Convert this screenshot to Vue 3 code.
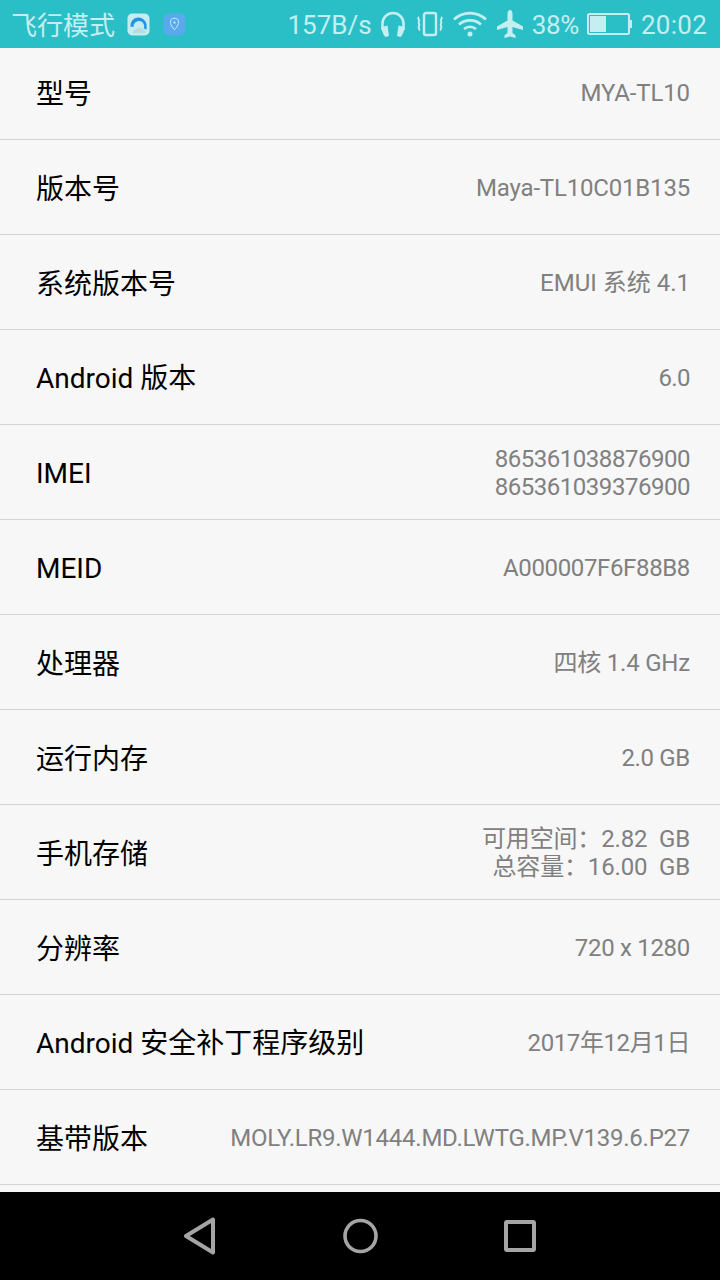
<template>
  <div class="screen">
    <div class="status-bar">
      <div class="status-left">
        <span class="carrier">飞行模式</span>
        <svg class="app-icon" width="23" height="23" viewBox="0 0 24 24">
          <rect x="0.5" y="0.5" width="23" height="23" rx="5" fill="#c5ecee" />
          <path d="M3.500 14a8.500 8.500 0 0 1 17-1.500v5l-3-1.500a5.500 5.500 0 1 0-10.500-1.500z" fill="#2196e8" />
          <path d="M6 21c0-2.500 2-3.800 3.500-3.800 1-2.400 5.500-2.400 6.500 0 2 0 3.500 1.500 3.500 3.800z" fill="#b5dde0" />
        </svg>
        <svg class="app-icon loc" width="23" height="23" viewBox="0 0 24 24">
          <rect x="0.500" y="0.500" width="23" height="23" rx="6" fill="#5aa9ec" />
          <path d="M12 5.500a4.300 4.300 0 0 0-4.300 4.300c0 3 4.300 7.700 4.300 7.700s4.300-4.700 4.300-7.700A4.300 4.300 0 0 0 12 5.500z" fill="none" stroke="#d3edf5" stroke-width="1" />
          <circle cx="12" cy="10" r="1.200" fill="#d3edf5" />
        </svg>
      </div>
      <div class="status-right">
        <span class="speed">157B/s</span>
        <svg class="st-headset" width="28" height="28" viewBox="0 0 28 28" fill="none">
          <path d="M3.500 20v-6.500a10.500 10.500 0 0 1 21 0V20" stroke="#c5eef0" stroke-width="2.600" />
          <path d="M2.500 17l6-1.500L10 26l-3.500 1C4.500 25 2.500 21 2.500 17zM25.500 17l-6-1.500L18 26l3.500 1c2-2 4-6 4-10z" fill="#c5eef0" />
        </svg>
        <svg class="st-vibrate" width="28" height="26" viewBox="0 0 28 26" fill="none" stroke="#c5eef0" stroke-width="2">
          <rect x="8" y="2" width="12" height="22" rx="2" stroke-width="2.400" />
          <path d="M3 6c-2.500 1.500 1.500 3 0 4.500s1.500 3 0 4.500 1.500 3 0 4.500M25 6c2.500 1.500-1.500 3 0 4.500s-1.500 3 0 4.500-1.500 3 0 4.500" />
        </svg>
        <svg class="st-wifi" width="34" height="26" viewBox="0 0 34 26" fill="none" stroke="#c5eef0" stroke-width="2.600">
          <path d="M1 8.500c9-8.500 23-8.500 32 0M6 13.500c6-5.500 16-5.500 22 0M11 18c3.500-3 8.500-3 12 0" />
          <circle cx="17" cy="23" r="2.500" fill="#c5eef0" stroke="none" />
        </svg>
        <svg class="st-plane" width="28" height="28" viewBox="0 0 28 28">
          <path d="M14 0c1.600 0 2.500 2 2.500 4v6.500L27 16.500V20l-10.500-3v6l3 2.200V28L14 26.500 8.500 28v-2.800l3-2.200v-6L1 20v-3.500l10.500-6V4c0-2 .9-4 2.500-4z" fill="#c5eef0" />
        </svg>
        <span class="pct">38%</span>
        <svg class="st-battery" width="46" height="24" viewBox="0 0 46 24" fill="none">
          <rect x="1" y="2" width="41" height="20" rx="1.500" stroke="#c5eef0" stroke-width="2" />
          <rect x="3" y="4" width="16" height="16" fill="#c5eef0" />
          <rect x="43" y="8" width="2" height="8" fill="#c5eef0" />
        </svg>
        <span class="time">20:02</span>
      </div>
    </div>

    <div class="list">
      <div v-for="row in rows" :key="row.label" class="row" :class="{ first: row.first }">
        <div class="label" :class="{ cjk: row.cjk }">{{ row.label }}</div>
        <div class="value" :style="{ letterSpacing: row.track + 'px' }">
          <div v-for="line in row.value" :key="line">{{ line }}</div>
        </div>
      </div>
    </div>

    <div class="nav-bar">
      <svg width="34" height="38" viewBox="0 0 34 38" fill="none" stroke="#a5a5a5" stroke-width="4" stroke-linejoin="round">
        <path d="M30 2.500v33L3 19z" />
      </svg>
      <svg width="35" height="36" viewBox="0 0 35 36" fill="none" stroke="#a5a5a5" stroke-width="3.600">
        <circle cx="17.500" cy="18" r="15.500" />
      </svg>
      <svg width="32" height="32" viewBox="0 0 32 32" fill="none" stroke="#a5a5a5" stroke-width="4" stroke-linejoin="round">
        <rect x="2" y="2" width="28" height="28" rx="1" />
      </svg>
    </div>
  </div>
</template>

<script setup>
const rows = [
  { label: '型号', cjk: true, value: ['MYA-TL10'], track: -0.12, first: true },
  { label: '版本号', cjk: true, value: ['Maya-TL10C01B135'], track: -0.19 },
  { label: '系统版本号', cjk: true, value: ['EMUI 系统 4.1'], track: 0 },
  { label: 'Android 版本', value: ['6.0'], track: -0.6 },
  { label: 'IMEI', value: ['865361038876900', '865361039376900'], track: -0.47 },
  { label: 'MEID', value: ['A000007F6F88B8'], track: -0.36 },
  { label: '处理器', cjk: true, value: ['四核 1.4 GHz'], track: -0.2 },
  { label: '运行内存', cjk: true, value: ['2.0 GB'], track: -0.33 },
  { label: '手机存储', cjk: true, value: ['可用空间：2.82  GB', '总容量：16.00  GB'], track: -0.15 },
  { label: '分辨率', cjk: true, value: ['720 x 1280'], track: -0.3 },
  { label: 'Android 安全补丁程序级别', value: ['2017年12月1日'], track: -0.4 },
  { label: '基带版本', cjk: true, value: ['MOLY.LR9.W1444.MD.LWTG.MP.V139.6.P27'], track: -0.25 }
]
</script>

<style scoped>
.screen {
  width: 720px;
  height: 1280px;
  display: flex;
  flex-direction: column;
  overflow: hidden;
  background: #f7f7f7;
  font-family: Roboto, "Noto Sans CJK SC", sans-serif;
}
.status-bar {
  height: 48px;
  flex: none;
  display: flex;
  justify-content: space-between;
  align-items: center;
  padding: 0 13px 0 11px;
  background: #2abfc7;
  color: #c5eef0;
  font-size: 26px;
}
.status-left,
.status-right {
  display: flex;
  align-items: center;
}
.carrier {
  padding-bottom: 2px;
}
.app-icon {
  margin-left: 12px;
}
.app-icon.loc {
  margin-left: 13px;
}
.speed,
.pct,
.time {
  padding-top: 2px;
}
.speed {
  margin-right: 7px;
}
.st-headset {
  margin-right: 9px;
}
.st-vibrate {
  margin-right: 9px;
}
.st-wifi {
  margin-right: 9px;
}
.st-plane {
  margin-right: 8px;
}
.pct {
  margin-right: 8px;
  letter-spacing: -0.3px;
}
.st-battery {
  margin-right: 8px;
}
.time {
  letter-spacing: 0.25px;
}
.list {
  flex: 1;
  min-height: 0;
  overflow: hidden;
}
.row {
  height: 95px;
  box-sizing: border-box;
  display: flex;
  justify-content: space-between;
  align-items: center;
  padding: 0 30px 0 36px;
  border-bottom: 1px solid #d4d4d4;
}
.row.first {
  height: 92px;
  padding-bottom: 3px;
}
.label {
  flex: none;
  padding-top: 4px;
  font-size: 28px;
  line-height: 40px;
  color: #000;
}
.label.cjk {
  padding-top: 6px;
}
.value {
  padding-top: 2px;
  text-align: right;
  font-size: 24px;
  line-height: 28px;
  color: #808080;
  white-space: pre;
}
.nav-bar {
  height: 88px;
  flex: none;
  display: flex;
  justify-content: center;
  align-items: center;
  gap: 126px;
  padding-right: 1px;
  background: #000;
}
</style>
